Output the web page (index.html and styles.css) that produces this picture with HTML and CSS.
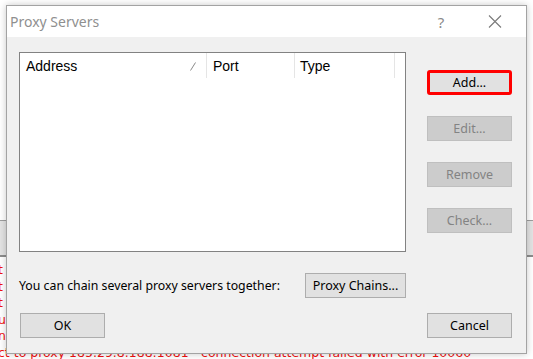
FILE: index.html
```html
<!DOCTYPE html>
<html lang="en">
<head>
    <meta charset="UTF-8">
    <title>Proxy Servers</title>
    <link rel="stylesheet" href="styles.css">
</head>
<body>
    <div class="backdrop">
        <div class="backdrop-top"></div>
        <div class="toolbar"></div>
        <div class="log">
            <div class="log-line">t f</div>
            <div class="log-line">t f</div>
            <div class="log-line">t f</div>
            <div class="log-line">ue</div>
            <div class="log-line">nn</div>
            <div class="log-line">ct to proxy 185.29.8.188:1081 - connection attempt failed with error 10060</div>
        </div>
    </div>

    <div class="dialog">
        <div class="titlebar">
            <span class="title">Proxy Servers</span>
            <span class="title-btn help">?</span>
            <span class="title-btn close">
                <svg width="14" height="13" viewBox="0 0 14 13">
                    <path d="M1 0.5 L13 12.5 M13 0.5 L1 12.5" stroke="#7a7a7a" stroke-width="1.1" fill="none"/>
                </svg>
            </span>
        </div>
        <div class="content">
            <div class="main-row">
                <div class="listbox">
                    <div class="list-header">
                        <div class="col col-address">
                            <span>Address</span>
                            <svg width="8" height="9" viewBox="0 0 8 9">
                                <path d="M1.5 8.5 L6.5 0.5" stroke="#8a8a8a" stroke-width="1" fill="none"/>
                            </svg>
                        </div>
                        <div class="col col-port">Port</div>
                        <div class="col col-type">Type</div>
                    </div>
                </div>
                <div class="side-buttons">
                    <button class="btn highlight">Add...</button>
                    <button class="btn" disabled>Edit...</button>
                    <button class="btn" disabled>Remove</button>
                    <button class="btn" disabled>Check...</button>
                </div>
            </div>
            <div class="chain-row">
                <span class="chain-text">You can chain several proxy servers together:</span>
                <button class="btn btn-chains">Proxy Chains...</button>
            </div>
            <div class="footer">
                <button class="btn btn-ok">OK</button>
                <button class="btn">Cancel</button>
            </div>
        </div>
    </div>
</body>
</html>
```

FILE: styles.css
```css
body {
    margin: 0;
    background-color: #fff;
    font-family: "Noto Sans", "Open Sans", sans-serif;
    overflow: hidden;
}

/* window behind the dialog */
.backdrop {
    width: 533px;
    height: 359px;
    overflow: hidden;
}

.backdrop-top {
    height: 220px;
}

.toolbar {
    height: 34px;
    border-top: 1px solid #9d9d9d;
    border-bottom: 2px solid #8c8c8c;
    background-color: #e3e3e3;
}

.log {
    padding-top: 5px;
    color: #f01010;
    font-family: "DejaVu Sans", sans-serif;
    font-size: 12.5px;
    line-height: 16.6px;
}

.log-line {
    white-space: nowrap;
    margin-left: -2px;
}

/* dialog */
.dialog {
    position: absolute;
    left: 6px;
    top: 5px;
    width: 521px;
    height: 349px;
    box-sizing: border-box;
    border: 1px solid #a3a3a3;
    background-color: #f0f0f0;
    box-shadow: 0 0 7px rgba(0, 0, 0, 0.22);
}

.titlebar {
    display: flex;
    align-items: center;
    height: 31px;
    background-color: #fff;
    padding-left: 3px;
}

.title {
    flex: 1;
    font-size: 14px;
    color: #8f8f8f;
}

.title-btn {
    display: flex;
    justify-content: center;
    align-items: center;
}

.help {
    width: 20px;
    margin-right: 37px;
    font-size: 15px;
    color: #8a8a8a;
}

.close {
    width: 14px;
    margin-right: 24px;
}

.content {
    padding: 15px 14px 0 12px;
}

.main-row {
    display: flex;
    gap: 21px;
}

.listbox {
    width: 387px;
    height: 200px;
    box-sizing: border-box;
    border: 1px solid #828282;
    background-color: #fff;
}

.list-header {
    display: flex;
    height: 25px;
    font-family: "Liberation Sans", Arial, sans-serif;
    font-size: 14px;
    color: #000;
}

.col {
    display: flex;
    align-items: center;
    box-sizing: border-box;
    padding-left: 6px;
    padding-top: 1px;
    border-right: 1px solid #e5e5e5;
}

.col-address {
    width: 187px;
    justify-content: space-between;
    padding-right: 9px;
}

.col-port {
    width: 88px;
}

.col-type {
    width: 100px;
    padding-left: 5px;
}

.side-buttons {
    display: flex;
    flex-direction: column;
    gap: 21px;
    padding-top: 18px;
}

.btn {
    width: 85px;
    height: 25px;
    box-sizing: border-box;
    border: 1px solid #adadad;
    background-color: #e1e1e1;
    font-family: "Noto Sans", "Open Sans", sans-serif;
    font-size: 12.5px;
    color: #000;
    padding: 0;
}

.btn:disabled {
    background-color: #cccccc;
    border-color: #bfbfbf;
    color: #838383;
}

.btn.highlight {
    border: 3px solid #ff0000;
    border-radius: 3px;
    height: 25px;
}

.chain-row {
    display: flex;
    justify-content: space-between;
    align-items: center;
    width: 387px;
    margin-top: 21px;
}

.chain-text {
    font-size: 12.3px;
    color: #000;
}

.btn-chains {
    width: 101px;
}

.footer {
    display: flex;
    justify-content: space-between;
    margin-top: 15px;
}

.btn-ok {
    margin-left: 1px;
}
```
